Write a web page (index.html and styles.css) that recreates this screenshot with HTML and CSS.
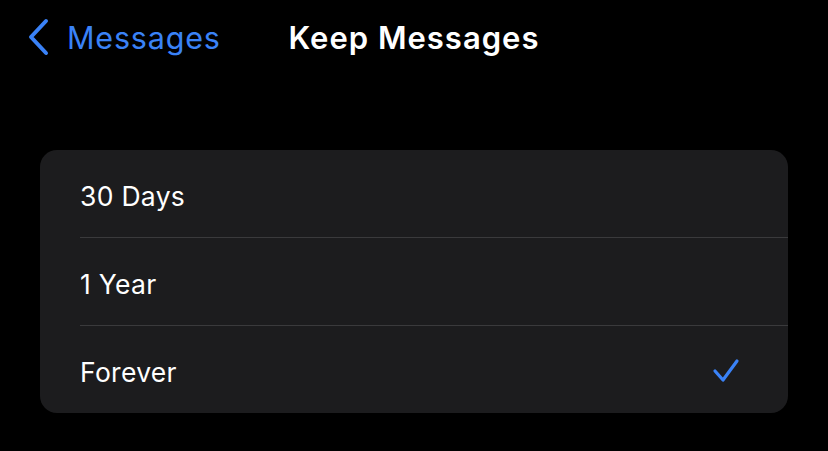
FILE: index.html
```html
<!DOCTYPE html>
<html lang="en">
<head>
    <meta charset="UTF-8">
    <meta name="viewport" content="width=device-width, initial-scale=1.0">
    <title>Keep Messages</title>
    <link rel="stylesheet" href="styles.css">
</head>
<body>

<div class="nav">
    <a class="back" href="#">
        <svg class="chevron" width="22" height="38" viewBox="0 0 22 38">
            <path d="M19 3 L4 19 L19 35" fill="none" stroke="currentColor" stroke-width="4" stroke-linecap="round" stroke-linejoin="round"/>
        </svg>
        <span>Messages</span>
    </a>
    <h1>Keep Messages</h1>
    <div></div>
</div>

<div class="list">
    <div class="row"><div class="row-inner">30 Days</div></div>
    <div class="row"><div class="row-inner">1 Year</div></div>
    <div class="row">
        <div class="row-inner">
            Forever
            <svg class="check" width="28" height="26" viewBox="0 0 28 26">
                <path d="M3 14 L11 23 L25 4" fill="none" stroke="currentColor" stroke-width="3.2" stroke-linecap="round" stroke-linejoin="round"/>
            </svg>
        </div>
    </div>
</div>

</body>
</html>
```

FILE: styles.css
```css
body {
    margin: 0;
    background-color: #000;
    color: #fff;
    font-family: Inter, "Noto Sans", sans-serif;
}
.nav {
    display: grid;
    grid-template-columns: 1fr auto 1fr;
    align-items: center;
    height: 74px;
    padding: 0 27px;
}
.back {
    display: flex;
    align-items: center;
    gap: 18px;
    color: #3a82f7;
    text-decoration: none;
    font-size: 30.5px;
    letter-spacing: 0.8px;
}
.chevron {
    display: block;
}
h1 {
    margin: 0;
    font-size: 31px;
    font-weight: 600;
    letter-spacing: 1px;
    color: #fff;
}
.list {
    margin: 76px 40px 0 40px;
    background-color: #1c1c1e;
    border-radius: 17px;
    overflow: hidden;
}
.row {
    padding-left: 40px;
}
.row-inner {
    display: flex;
    align-items: center;
    justify-content: space-between;
    height: 87px;
    padding: 4px 48px 0 0;
    box-sizing: border-box;
    font-size: 26.5px;
    letter-spacing: 0.3px;
}
.row + .row .row-inner {
    height: 88px;
    border-top: 1px solid #3a3a3c;
}
.check {
    color: #3a82f7;
    display: block;
    margin-top: -4px;
}
```
